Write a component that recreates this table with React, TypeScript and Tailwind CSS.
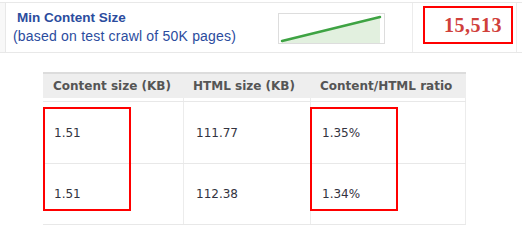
const rows = [
  { content: "1.51", html: "111.77", ratio: "1.35%" },
  { content: "1.51", html: "112.38", ratio: "1.34%" },
];

const Sparkline = () => (
  <div className="w-[107px] h-[31px] border border-[#dddddd] bg-white">
    <svg width="105" height="29" viewBox="0 0 105 29">
      <polygon points="3,27 101,3 101,29 3,29" fill="#e2f0df" />
      <line x1="3" y1="27" x2="101" y2="3" stroke="#3ea343" strokeWidth="2.5" strokeLinecap="round" />
    </svg>
  </div>
);

const App = () => {
  return (
    <div className="relative w-[522px] h-[250px] overflow-hidden bg-white pt-[2px]">
      {/* stat strip */}
      <div className="flex h-[51px] border-t border-b border-[#e8e8e8]">
        <div className="w-[6px] bg-[#f8f8f8] border-r border-[#e8e8e8]" />
        <div
          className="w-[272px] pl-[7px] pt-[6px] leading-[18px] text-[#2b4c9e]"
          style={{ fontFamily: '"Liberation Sans", Arial, sans-serif' }}
        >
          <div className="pl-[4px] text-[13.5px] font-bold">Min Content Size</div>
          <div className="text-[14px] tracking-[0.2px]">(based on test crawl of 50K pages)</div>
        </div>
        <div className="w-[134px] pt-[10px]">
          <Sparkline />
        </div>
        <div className="border-l border-r border-[#ececec] pl-[10px] pr-[3px] pt-[3px]">
          <div
            className="w-[90px] h-[38px] border-2 border-[#ff0000] flex items-center justify-end pr-[9px] text-[20px] font-bold text-[#d0403a] tracking-[0.5px]"
            style={{ fontFamily: '"Liberation Serif", "Times New Roman", serif' }}
          >
            15,513
          </div>
        </div>
      </div>

      {/* table */}
      <div
        className="ml-[43px] mt-[19px] w-[423px] text-[12px]"
        style={{ fontFamily: '"DejaVu Sans", Verdana, sans-serif' }}
      >
        <div className="grid grid-cols-[140px_127px_156px] h-[26px] border-t-2 border-[#dcdcdc] bg-[#eeeeee] font-bold text-[#555555] items-center">
          <div className="pl-[10px]">Content size (KB)</div>
          <div className="pl-[10px]">HTML size (KB)</div>
          <div className="pl-[10px]">Content/HTML ratio</div>
        </div>
        <div className="grid grid-cols-[140px_127px_156px] h-[3px]">
          <div />
          <div className="border-l border-[#ececec]" />
          <div className="border-l border-r border-[#ececec]" />
        </div>
        {rows.map((row, i) => (
          <div
            key={i}
            className={`grid grid-cols-[140px_127px_156px] border-t border-[#e8e8e8] text-[#333340] ${
              i === rows.length - 1 ? "h-[62px] border-b" : "h-[62px]"
            }`}
          >
            <div className="pl-[11px] flex items-center">{row.content}</div>
            <div className="pl-[12px] flex items-center border-l border-[#ececec]">{row.html}</div>
            <div className="pl-[11px] flex items-center border-l border-r border-[#ececec]">{row.ratio}</div>
          </div>
        ))}
      </div>

      {/* highlight boxes */}
      <div className="absolute left-[43px] top-[107px] w-[88px] h-[104px] border-2 border-[#ff0000]" />
      <div className="absolute left-[310px] top-[107px] w-[88px] h-[104px] border-2 border-[#ff0000]" />
    </div>
  );
};

export default App;
